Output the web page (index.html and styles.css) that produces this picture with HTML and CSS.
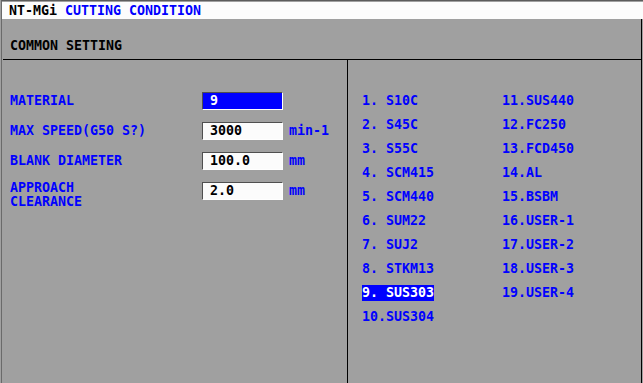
FILE: index.html
```html
<!DOCTYPE html>
<html>
<head>
<meta charset="utf-8">
<link rel="stylesheet" href="styles.css">
</head>
<body>
<div class="screen">
  <div class="titlebar"><span class="mach">NT-MGi</span> <span class="name">CUTTING CONDITION</span></div>
  <div class="main">
    <div class="section-head">COMMON SETTING</div>
    <div class="panes">
      <div class="settings">
        <div class="row">
          <div class="label">MATERIAL</div>
          <div class="field selected">9</div>
        </div>
        <div class="row">
          <div class="label">MAX SPEED(G50 S?)</div>
          <div class="field">3000</div>
          <div class="unit">min-1</div>
        </div>
        <div class="row">
          <div class="label">BLANK DIAMETER</div>
          <div class="field">100.0</div>
          <div class="unit">mm</div>
        </div>
        <div class="row">
          <div class="label two">APPROACH<br>CLEARANCE</div>
          <div class="field">2.0</div>
          <div class="unit">mm</div>
        </div>
      </div>
      <div class="materials">
        <div class="item">1. S10C</div>
        <div class="item">2. S45C</div>
        <div class="item">3. S55C</div>
        <div class="item">4. SCM415</div>
        <div class="item">5. SCM440</div>
        <div class="item">6. SUM22</div>
        <div class="item">7. SUJ2</div>
        <div class="item">8. STKM13</div>
        <div class="item"><span class="hl">9. SUS303</span></div>
        <div class="item">10.SUS304</div>
        <div class="item">11.SUS440</div>
        <div class="item">12.FC250</div>
        <div class="item">13.FCD450</div>
        <div class="item">14.AL</div>
        <div class="item">15.BSBM</div>
        <div class="item">16.USER-1</div>
        <div class="item">17.USER-2</div>
        <div class="item">18.USER-3</div>
        <div class="item">19.USER-4</div>
      </div>
    </div>
  </div>
</div>
</body>
</html>
```
FILE: styles.css
```css
html, body {
  margin: 0;
  padding: 0;
  background: #a0a0a0;
}
body {
  width: 643px;
  height: 383px;
  overflow: hidden;
  font-family: "DejaVu Sans Mono", "Liberation Mono", monospace;
  font-size: 13.29px;
  font-weight: bold;
  color: #0000ff;
}
.screen {
  margin-left: 1px;
  height: 383px;
  box-sizing: border-box;
  border-top: 1px solid #5c5c5c;
  border-left: 1px solid #6a6a6a;
  padding-top: 1px;
  display: flex;
  flex-direction: column;
}
.titlebar {
  height: 17px;
  line-height: 17px;
  background: #fcfcfc;
  padding-left: 7px;
  white-space: pre;
}
.mach { color: #000; }
.name { color: #0000ff; }
.main {
  flex: 1;
  margin: 0 1px 0 1px;
  border-right: 1px solid #000;
  display: flex;
  flex-direction: column;
}
.section-head {
  height: 41px;
  box-sizing: border-box;
  border-bottom: 1px solid #000;
  padding: 19px 0 0 7px;
  line-height: 16px;
  color: #000;
}
.panes {
  flex: 1;
  display: flex;
}
.settings {
  width: 344px;
  border-right: 1px solid #000;
  padding: 32px 0 0 7px;
  box-sizing: border-box;
  width: 345px;
}
.row {
  display: flex;
  align-items: flex-start;
  height: 30px;
}
.label {
  width: 192px;
  line-height: 18px;
}
.label.two {
  line-height: 14px;
  margin-top: -1px;
}
.field {
  width: 81px;
  height: 18px;
  box-sizing: border-box;
  border: 1px solid;
  border-color: #505050 #ffffff #ffffff #505050;
  background: #fcfcfc;
  color: #000;
  padding-left: 7px;
  line-height: 16px;
}
.field.selected {
  background: #0000ff;
  color: #fff;
}
.unit {
  margin-left: 6px;
  line-height: 18px;
}
.materials {
  flex: 1;
  padding: 33px 0 0 14px;
  display: grid;
  grid-template-columns: 140px 120px;
  grid-template-rows: repeat(10, 16px);
  row-gap: 8px;
  grid-auto-flow: column;
  align-content: start;
}
.item {
  line-height: 16px;
  white-space: pre;
}
.hl {
  display: inline-block;
  background: #0000ff;
  color: #fff;
}
```
